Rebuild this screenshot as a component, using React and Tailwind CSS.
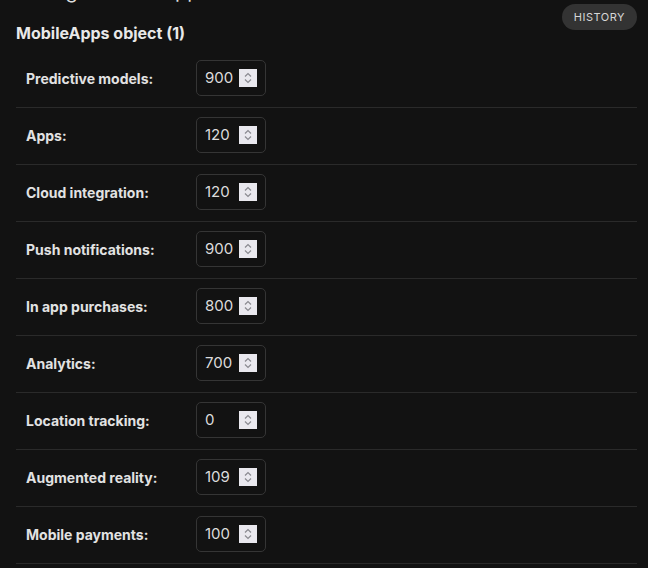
import React from 'react';

const fields = [
  { label: 'Predictive models:', value: '900' },
  { label: 'Apps:', value: '120' },
  { label: 'Cloud integration:', value: '120' },
  { label: 'Push notifications:', value: '900' },
  { label: 'In app purchases:', value: '800' },
  { label: 'Analytics:', value: '700' },
  { label: 'Location tracking:', value: '0' },
  { label: 'Augmented reality:', value: '109' },
  { label: 'Mobile payments:', value: '100' },
];

const Spinner = () => (
  <div className="w-[18px] h-[18px] bg-[#e9e8ee] flex items-center justify-center mr-[8px]">
    <svg width="10" height="14" viewBox="0 0 10 14" fill="none" stroke="#8a8a90" strokeWidth="1.2">
      <path d="M2 5.5 L5 2.5 L8 5.5" />
      <path d="M2 8.5 L5 11.5 L8 8.5" />
    </svg>
  </div>
);

const App = () => {
  return (
    <div className="min-h-[568px] bg-[#121212] text-[#e5e5e5] pl-4 pr-[11px] overflow-hidden" style={{ fontFamily: 'Inter, "Noto Sans", sans-serif' }}>
      <h1 className="-mt-[23px] text-[20px] leading-[28px] font-normal text-[#ddd]">Change mobile apps</h1>
      <div className="flex justify-between items-start">
        <h2 className="pt-[19px] text-[16px] leading-[18px] font-bold text-[#e8e8e8]">MobileApps object (1)</h2>
        <button className="-mt-px h-[26px] px-3 rounded-full bg-[#333333] text-[11px] tracking-[0.5px] text-[#d6d6d6] uppercase">
          History
        </button>
      </div>
      <div className="mt-[9px]">
        {fields.map((f) => (
          <div key={f.label} className="h-[57px] pb-[2px] border-b border-[#2a2a2a] flex items-center">
            <div className="w-[180px] pl-[10px] text-[14px] font-bold text-[#e2e2e2]">{f.label}</div>
            <div className="w-[70px] h-[36px] border border-[#353535] rounded-[5px] flex items-center pl-[8px]">
              <span className="flex-1 text-[15px] text-[#dcdcdc]">{f.value}</span>
              <Spinner />
            </div>
          </div>
        ))}
      </div>
    </div>
  );
};

export default App;
